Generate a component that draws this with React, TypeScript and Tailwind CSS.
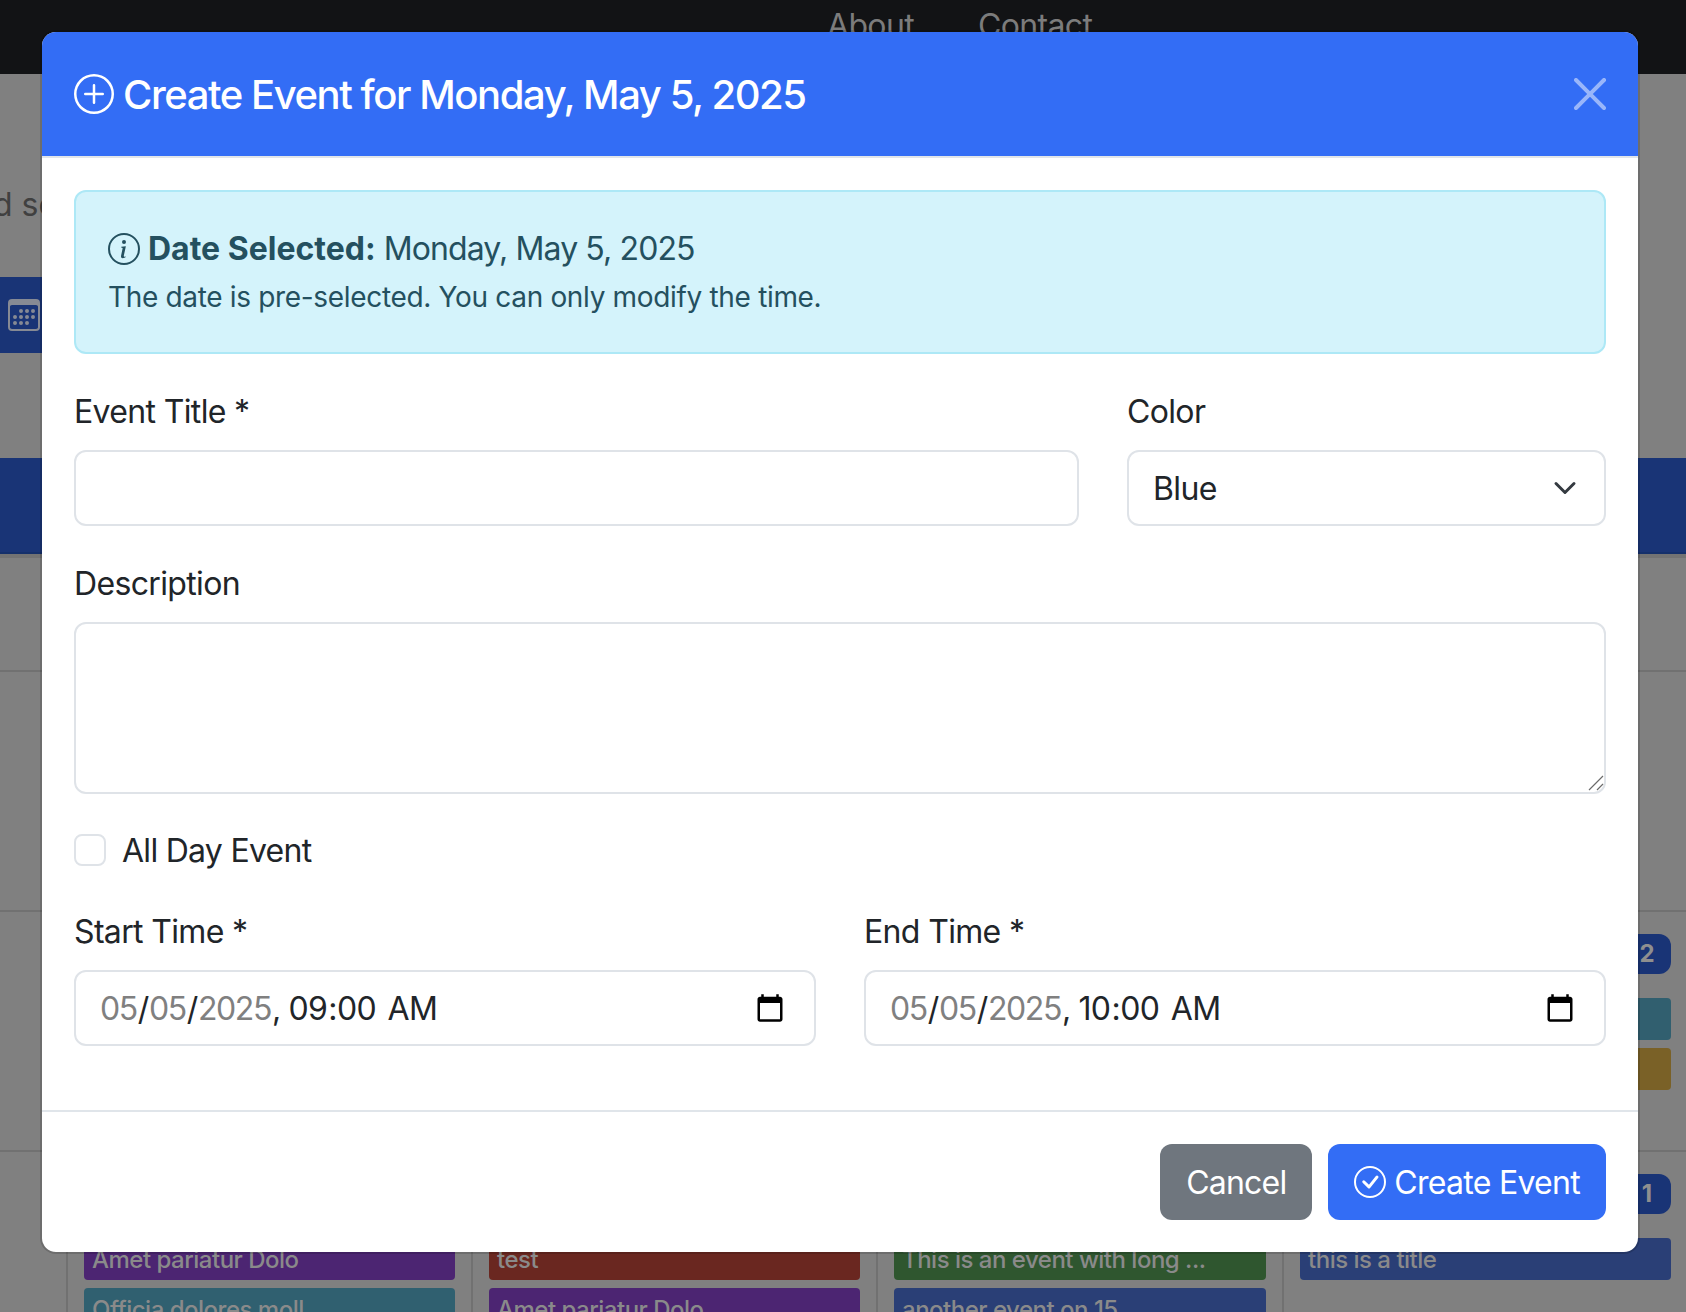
import React from "react";
import { BsPlusCircle, BsInfoCircle, BsCheckCircle, BsCalendar3 } from "react-icons/bs";

const cols = "grid grid-cols-[66px_405px_405px_406px_405px]";

function Cell({ children, first }: { children?: React.ReactNode; first?: boolean }) {
  return <div className={first ? "" : "border-l-2 border-[#717171] px-[16px] pt-[22px] flex flex-col"}>{children}</div>;
}

function Tile({ color, children }: { color: string; children?: React.ReactNode }) {
  return (
    <div className={`h-[42px] shrink-0 rounded-[4px] px-[8px] text-[24px] leading-[43px] tracking-[-0.5px] font-medium text-[#8a8a8a] truncate ${color}`}>
      {children}
    </div>
  );
}

function Badge({ n }: { n: string }) {
  return (
    <div className="self-end w-[48px] h-[40px] mb-[24px] rounded-[12px] bg-[#193476] text-[#8f8f8f] font-bold text-[24px] leading-[40px] text-center">
      {n}
    </div>
  );
}

function Label({ children }: { children: React.ReactNode }) {
  return <label className="block text-[32px] leading-[48px] pt-[2px] mb-[14px] tracking-[-0.65px] text-[#212529]">{children}</label>;
}

const field = "block w-full h-[76px] border-2 border-[#dfe3e8] rounded-[12px] bg-white pl-[24px] pr-[26px] pt-[2px] text-[32px] leading-[48px] tracking-[-0.65px] text-[#212529] outline-none";
const dateField = "block w-full h-[76px] border-2 border-[#dfe3e8] rounded-[12px] bg-white pl-[23px] pr-[26px] pt-[2px] text-[32px] leading-[48px] tracking-[-1.4px] text-[#212529] outline-none [&::-webkit-datetime-edit-hour-field]:tracking-[-0.65px] [&::-webkit-datetime-edit-minute-field]:tracking-[-0.65px] [&::-webkit-datetime-edit-ampm-field]:tracking-[-0.65px] [&::-webkit-datetime-edit-ampm-field]:ml-[5px]";

export default function App() {
  return (
    <div className="relative h-[1312px] overflow-hidden bg-[#808080] font-['Inter','Liberation_Sans',sans-serif] text-[#212529]">
      <nav className="h-[74px] bg-[#121315] pl-[827px] pt-[2px] flex gap-[64px] text-[32px] leading-[48px] tracking-[-0.65px] text-[#7c7c7c]">
        <span>About</span>
        <span>Contact</span>
      </nav>

      <div className="mt-[106px] -ml-[7px] pt-[1px] h-[48px] text-[32px] leading-[48px] text-[#404040]">d sc</div>

      <div className="mt-[49px] h-[76px] w-[300px] bg-[#193476] pl-[8px] flex items-center">
        <BsCalendar3 className="w-[32px] h-[32px] text-[#868a94]" />
      </div>

      <div className="mt-[105px] h-[96px] bg-[#193476] border-b-2 border-[#15306b]" />
      <div className="h-[4px] bg-[#737373]" />

      <div className={`${cols} h-[114px] border-b-2 border-[#717171]`}>
        <Cell first /><Cell /><Cell /><Cell /><Cell />
      </div>
      <div className={`${cols} h-[240px] border-b-2 border-[#717171]`}>
        <Cell first /><Cell /><Cell /><Cell /><Cell />
      </div>
      <div className={`${cols} h-[240px] border-b-2 border-[#717171]`}>
        <Cell first /><Cell /><Cell /><Cell />
        <Cell>
          <Badge n="2" />
          <div className="flex flex-col gap-[8px]">
            <Tile color="bg-[#315f6f]" />
            <Tile color="bg-[#7a6127]" />
          </div>
        </Cell>
      </div>
      <div className={`${cols} h-[200px]`}>
        <Cell first />
        <Cell>
          <div className="h-[64px] shrink-0" />
          <div className="flex flex-col gap-[8px]">
            <Tile color="bg-[#4c2572]">Amet pariatur Dolo</Tile>
            <Tile color="bg-[#306070]">Officia dolores moll</Tile>
          </div>
        </Cell>
        <Cell>
          <div className="h-[64px] shrink-0" />
          <div className="flex flex-col gap-[8px]">
            <Tile color="bg-[#6a2720]">test</Tile>
            <Tile color="bg-[#4c2572]">Amet pariatur Dolo</Tile>
          </div>
        </Cell>
        <Cell>
          <div className="h-[64px] shrink-0" />
          <div className="flex flex-col gap-[8px]">
            <Tile color="bg-[#2f562f]">This is an event with long ...</Tile>
            <Tile color="bg-[#2a3f76]">another event on 15</Tile>
          </div>
        </Cell>
        <Cell>
          <Badge n="1" />
          <div className="flex flex-col gap-[8px]">
            <Tile color="bg-[#2a3f76]">this is a title</Tile>
          </div>
        </Cell>
      </div>

      {/* Modal */}
      <div className="absolute left-[40px] top-[30px] w-[1600px] rounded-[16px] border-2 border-black/15 bg-white bg-clip-padding">
        <div className="h-[126px] rounded-t-[14px] bg-[#336df5] border-b-2 border-[#e0e5ea] px-[32px] flex items-center justify-between text-white">
          <h5 className="text-[40px] leading-[60px] font-medium flex items-center">
            <BsPlusCircle className="w-[40px] h-[40px] mr-[9px]" />
            <span className="pt-[2px] tracking-[-1.43px]">Create Event for Monday, May 5, 2025</span>
          </h5>
          <svg viewBox="0 0 16 16" className="w-[32px] h-[32px] opacity-50" fill="#fff">
            <path d="M.293.293a1 1 0 0 1 1.414 0L8 6.586 14.293.293a1 1 0 1 1 1.414 1.414L9.414 8l6.293 6.293a1 1 0 0 1-1.414 1.414L8 9.414l-6.293 6.293a1 1 0 0 1-1.414-1.414L6.586 8 .293 1.707a1 1 0 0 1 0-1.414" />
          </svg>
        </div>

        <div className="p-[32px]">
          <div className="mb-[32px] h-[164px] rounded-[12px] border-2 border-[#ade8f6] bg-[#d4f3fb] p-[32px] text-[#24505f]">
            <div className="text-[32px] leading-[48px] flex items-center">
              <BsInfoCircle className="w-[32px] h-[32px] mr-[8px]" />
              <strong className="font-bold pt-[1px]">Date Selected:</strong>
              <span className="ml-[8px] pt-[1px] tracking-[-0.88px]">Monday, May 5, 2025</span>
            </div>
            <div className="text-[28px] leading-[48px] tracking-[-0.33px]">The date is pre-selected. You can only modify the time.</div>
          </div>

          <div className="grid grid-cols-[1005px_479px] gap-x-[48px] mb-[32px]">
            <div>
              <Label>Event Title *</Label>
              <input type="text" className={field} />
            </div>
            <div>
              <Label>Color</Label>
              <div className="relative">
                <select className={`${field} appearance-none`} defaultValue="Blue">
                  <option>Blue</option>
                  <option>Red</option>
                  <option>Green</option>
                </select>
                <svg viewBox="0 0 16 16" className="absolute right-[29px] top-[26px] w-[24px] h-[24px] pointer-events-none" fill="none" stroke="#343a40" strokeWidth="2" strokeLinecap="round" strokeLinejoin="round">
                  <path d="m2 5 6 6 6-6" />
                </svg>
              </div>
            </div>
          </div>

          <div className="mb-[32px]">
            <Label>Description</Label>
            <div className="relative">
              <textarea className={`${field} !h-[172px] py-[12px] resize-none`} />
              <svg viewBox="0 0 16 16" className="absolute right-[2px] bottom-[3px] w-[16px] h-[16px] pointer-events-none" fill="none" stroke="#6a6a6a" strokeWidth="1.2">
                <path d="M1 15 15 1M9 15l6-6" />
              </svg>
            </div>
          </div>

          <label className="mb-[32px] h-[48px] flex items-center gap-[16px] text-[32px] leading-[48px] tracking-[-0.72px]">
            <input type="checkbox" className="appearance-none w-[32px] h-[32px] border-2 border-[#dfe3e8] rounded-[8px] bg-white" />
            <span className="pt-[2px]">All Day Event</span>
          </label>

          <div className="grid grid-cols-2 gap-x-[48px] mb-[32px]">
            <div>
              <Label>Start Time *</Label>
              <input type="datetime-local" className={dateField} defaultValue="2025-05-05T09:00" min="2025-05-05T00:00" max="2025-05-05T23:59" />
            </div>
            <div>
              <Label>End Time *</Label>
              <input type="datetime-local" className={dateField} defaultValue="2025-05-05T10:00" min="2025-05-05T00:00" max="2025-05-05T23:59" />
            </div>
          </div>
        </div>

        <div className="h-[2px] bg-[#e0e5ea]" />
        <div className="p-[32px] flex justify-end gap-[16px] text-[32px] leading-[48px] text-white tracking-[-0.8px]">
          <button className="h-[76px] rounded-[12px] bg-[#6f767e] px-[26px] pt-[2px]">Cancel</button>
          <button className="h-[76px] rounded-[12px] bg-[#336df5] px-[26px] flex items-center tracking-[-0.72px]">
            <BsCheckCircle className="w-[32px] h-[32px] mr-[8px]" />
            <span className="pt-[2px]">Create Event</span>
          </button>
        </div>
      </div>
    </div>
  );
}
